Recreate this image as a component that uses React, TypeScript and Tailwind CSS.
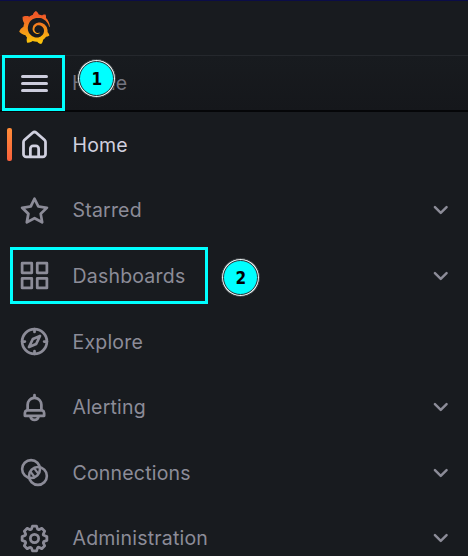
import type { ReactNode } from "react";
import { SiGrafana } from "react-icons/si";

const home =
  "M20,8h0L14,2.74a3,3,0,0,0-4,0L4,8a3,3,0,0,0-1,2.26V19a3,3,0,0,0,3,3H18a3,3,0,0,0,3-3V10.25A3,3,0,0,0,20,8ZM14,20H10V15a1,1,0,0,1,1-1h2a1,1,0,0,1,1,1Zm5-1a1,1,0,0,1-1,1H16V15a3,3,0,0,0-3-3H11a3,3,0,0,0-3,3v5H6a1,1,0,0,1-1-1V10.25a1,1,0,0,1,.34-.75l6-5.25a1,1,0,0,1,1.32,0l6,5.25a1,1,0,0,1,.34.75Z";
const star =
  "M22,9.67A1,1,0,0,0,21.14,9l-5.69-.83L12.9,3a1,1,0,0,0-1.8,0L8.55,8.16,2.86,9a1,1,0,0,0-.81.68,1,1,0,0,0,.25,1l4.13,4-1,5.68A1,1,0,0,0,6.9,21.44L12,18.77l5.1,2.67a.93.93,0,0,0,.46.12,1,1,0,0,0,.59-.19,1,1,0,0,0,.4-1l-1-5.68,4.13-4A1,1,0,0,0,22,9.67Zm-6.15,4a1,1,0,0,0-.29.88l.72,4.2-3.76-2a1.06,1.06,0,0,0-.94,0l-3.76,2,.72-4.2a1,1,0,0,0-.29-.88l-3-3,4.21-.61a1,1,0,0,0,.76-.55L12,5.7l1.88,3.82a1,1,0,0,0,.76.55l4.21.61Z";
const apps =
  "M10,13H3a1,1,0,0,0-1,1v7a1,1,0,0,0,1,1h7a1,1,0,0,0,1-1V14A1,1,0,0,0,10,13ZM9,20H4V15H9ZM21,2H14a1,1,0,0,0-1,1v7a1,1,0,0,0,1,1h7a1,1,0,0,0,1-1V3A1,1,0,0,0,21,2ZM20,9H15V4h5Zm1,4H14a1,1,0,0,0-1,1v7a1,1,0,0,0,1,1h7a1,1,0,0,0,1-1V14A1,1,0,0,0,21,13Zm-1,7H15V15h5ZM10,2H3A1,1,0,0,0,2,3v7a1,1,0,0,0,1,1h7a1,1,0,0,0,1-1V3A1,1,0,0,0,10,2ZM9,9H4V4H9Z";
const bell =
  "M18,13.18V10a6,6,0,0,0-5-5.91V3a1,1,0,0,0-2,0V4.09A6,6,0,0,0,6,10v3.18A3,3,0,0,0,4,16v2a1,1,0,0,0,1,1H8.14a4,4,0,0,0,7.72,0H19a1,1,0,0,0,1-1V16A3,3,0,0,0,18,13.18ZM8,10a4,4,0,0,1,8,0v3H8Zm4,10a2,2,0,0,1-1.72-1h3.44A2,2,0,0,1,12,20Zm6-3H6V16a1,1,0,0,1,1-1H17a1,1,0,0,1,1,1Z";
const cog =
  "M21.32,9.55l-1.89-.63.89-1.78A1,1,0,0,0,20.13,6L18,3.87a1,1,0,0,0-1.15-.19l-1.78.89-.63-1.89A1,1,0,0,0,13.5,2h-3a1,1,0,0,0-.95.68L8.92,4.57,7.14,3.68A1,1,0,0,0,6,3.87L3.87,6a1,1,0,0,0-.19,1.15l.89,1.78-1.89.63A1,1,0,0,0,2,10.5v3a1,1,0,0,0,.68.95l1.89.63-.89,1.78A1,1,0,0,0,3.87,18L6,20.13a1,1,0,0,0,1.15.19l1.78-.89.63,1.89a1,1,0,0,0,.95.68h3a1,1,0,0,0,.95-.68l.63-1.89,1.78.89A1,1,0,0,0,18,20.13L20.13,18a1,1,0,0,0,.19-1.15l-.89-1.78,1.89-.63A1,1,0,0,0,22,13.5v-3A1,1,0,0,0,21.32,9.55ZM20,12.78l-1.2.4A2,2,0,0,0,17.64,16l.57,1.14-1.1,1.1L16,17.64a2,2,0,0,0-2.79,1.16l-.4,1.2H11.22l-.4-1.2A2,2,0,0,0,8,17.64l-1.14.57-1.1-1.1L6.36,16A2,2,0,0,0,5.2,13.18L4,12.78V11.22l1.2-.4A2,2,0,0,0,6.36,8L5.79,6.89l1.1-1.1L8,6.36A2,2,0,0,0,10.82,5.2l.4-1.2h1.56l.4,1.2A2,2,0,0,0,16,6.36l1.14-.57,1.1,1.1L17.64,8a2,2,0,0,0,1.16,2.79l1.2.4ZM12,8a4,4,0,1,0,4,4A4,4,0,0,0,12,8Zm0,6a2,2,0,1,1,2-2A2,2,0,0,1,12,14Z";

const compass = (
  <g fill="none" stroke="currentColor" strokeWidth="2" strokeLinecap="round" strokeLinejoin="round">
    <circle cx="12" cy="12" r="9" />
    <path d="M12 3v2M12 19v2M3 12h2M19 12h2" />
    <path d="M16 8 10.8 10.2 8 16 13.2 13.8Z" />
  </g>
);

const rings = (
  <g fill="none" stroke="currentColor" strokeWidth="1.9">
    <circle cx="9.5" cy="9.5" r="6.5" />
    <circle cx="14.5" cy="14.5" r="6.5" />
    <path d="m9.2 11.6 3.1 4M11.8 9l3.1 4" strokeWidth="1.6" />
  </g>
);

type Item = { label: string; icon: ReactNode; active?: boolean; expandable?: boolean; marker?: string };

const items: Item[] = [
  { label: "Home", icon: <path d={home} />, active: true },
  { label: "Starred", icon: <path d={star} />, expandable: true },
  { label: "Dashboards", icon: <path d={apps} />, expandable: true, marker: "2" },
  { label: "Explore", icon: compass },
  { label: "Alerting", icon: <path d={bell} />, expandable: true },
  { label: "Connections", icon: rings, expandable: true },
  { label: "Administration", icon: <path d={cog} />, expandable: true },
];

function Badge({ children, className }: { children: ReactNode; className: string }) {
  return (
    <span
      className={`absolute flex size-[39px] items-center justify-center rounded-full border border-[#303438] bg-[#e8efef] p-[1px] ${className}`}
    >
      <span className="flex size-full items-center justify-center rounded-full border border-[#263238] bg-[#00ffff] pt-[2px] font-['DejaVu_Sans_Condensed','DejaVu_Sans',sans-serif] text-[17px] font-bold tracking-normal text-black [font-stretch:75%]">
        {children}
      </span>
    </span>
  );
}

function NavRow({ item }: { item: Item }) {
  return (
    <li
      className={`relative flex h-[65.6px] shrink-0 items-center pr-[20px] pl-[18px] ${item.active ? "text-[#d0d0df]" : "text-[#8c8c98]"}`}
    >
      {item.active && (
        <span className="absolute left-[7px] h-[33px] w-[5px] rounded-[2px] bg-linear-to-b from-[#ff8c38] to-[#f8603c]" />
      )}
      <svg viewBox="0 0 24 24" className="size-[33px] shrink-0" fill="currentColor">
        {item.icon}
      </svg>
      <span className="ml-[21.5px] flex-1">{item.label}</span>
      {item.expandable && (
        <svg viewBox="0 0 16 10" className="h-[10px] w-[15.5px]" fill="none" stroke="currentColor" strokeWidth="2.5" strokeLinecap="round" strokeLinejoin="round">
          <path d="m2 2 6 6 6-6" />
        </svg>
      )}
      {item.marker && (
        <>
          <span className="absolute top-[4.2px] left-[9.5px] h-[57px] w-[198px] border-3 border-[#00ffff]" />
          <Badge className="top-[14.8px] left-[221.4px]">{item.marker}</Badge>
        </>
      )}
    </li>
  );
}

export default function App() {
  return (
    <div className="flex h-[556px] w-[468px] flex-col overflow-hidden bg-[#181b1f] font-['Inter',sans-serif] text-[19.5px] leading-6 tracking-[0.2px]">
      <header className="flex h-[56px] shrink-0 items-center border-t border-b border-t-[#0b0d47] border-b-[#25282d] pb-[2px] pl-[18px]">
        <svg width="0" height="0" className="absolute">
          <defs>
            <linearGradient id="flame" x1="0" y1="0" x2="0" y2="1">
              <stop offset="0.15" stopColor="#f05a28" />
              <stop offset="1" stopColor="#fbca0a" />
            </linearGradient>
          </defs>
        </svg>
        <SiGrafana size={33} fill="url(#flame)" />
      </header>
      <div className="relative flex h-[56px] shrink-0 items-center border-b-2 border-[#050608] bg-linear-to-b from-[#181b1f] to-[#15171b] pl-[21px] text-[#74747f]">
        <div className="flex w-[27px] flex-col gap-[4px] text-[#ccccdc]">
          <span className="h-[3px] rounded-full bg-current" />
          <span className="h-[3px] rounded-full bg-current" />
          <span className="h-[3px] rounded-full bg-current" />
        </div>
        <span className="ml-[24px]">Home</span>
        <span className="absolute top-[-1px] left-[1.5px] h-[56px] w-[63px] border-3 border-[#00ffff]" />
        <Badge className="top-[2.5px] left-[77.3px]">1</Badge>
      </div>
      <ul className="flex flex-col">
        {items.map((item) => (
          <NavRow key={item.label} item={item} />
        ))}
      </ul>
    </div>
  );
}
